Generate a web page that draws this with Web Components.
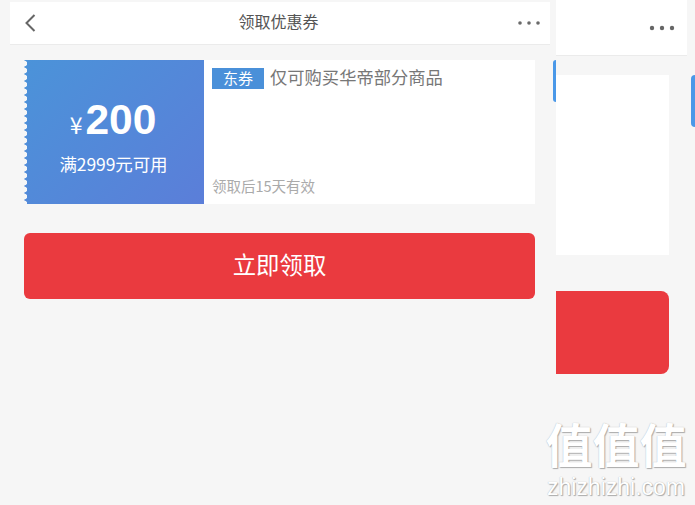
<!DOCTYPE html>
<html lang="zh">
<head>
<meta charset="utf-8">
<title>领取优惠券</title>
<style>
  html, body { margin: 0; height: 100%; }
  body {
    width: 695px;
    height: 505px;
    overflow: hidden;
    background: #f6f6f6;
    font-family: "Noto Sans CJK SC", "Liberation Sans", sans-serif;
    position: relative;
  }
  #stage { display: flex; height: 100%; }
</style>
</head>
<body>
<div id="stage">
  <coupon-page>
    <nav-bar title="领取优惠券"></nav-bar>
    <coupon-ticket amount="200" rule="满2999元可用" tag="东券" desc="仅可购买华帝部分商品" expire="领取后15天有效"></coupon-ticket>
    <claim-button>立即领取</claim-button>
  </coupon-page>
  <next-page></next-page>
</div>
<side-tab style="left:553px;top:60px;width:3px;height:42px"></side-tab>
<side-tab style="left:691px;top:75px;width:4px;height:52px"></side-tab>
<site-mark></site-mark>

<script>
const DOTS = `<svg width="22" height="4" viewBox="0 0 22 4" fill="#6a6a6a"><circle cx="2" cy="2" r="1.8"/><circle cx="11" cy="2" r="1.8"/><circle cx="20" cy="2" r="1.8"/></svg>`;

class CouponPage extends HTMLElement {
  constructor() {
    super();
    this.attachShadow({ mode: "open" }).innerHTML = `
      <style>
        :host { display: flex; flex-direction: column; width: 540px; margin-left: 10px; padding-top: 2px; box-sizing: border-box; }
      </style>
      <slot></slot>`;
  }
}

class NavBar extends HTMLElement {
  constructor() {
    super();
    this.attachShadow({ mode: "open" }).innerHTML = `
      <style>
        :host { display: flex; align-items: center; justify-content: space-between; height: 42px; padding: 0 10px 0 14px; background: #fff; border-bottom: 1px solid #ebebeb; color: #555; }
        svg { display: block; }
        .title { font-size: 16px; line-height: 38px; padding-bottom: 4px; margin-left: 3px; }
      </style>
      <svg width="12" height="18" viewBox="0 0 12 18" fill="none" stroke="#666" stroke-width="2"><path d="M10.5 1 L2.5 9 L10.5 17"/></svg>
      <span class="title">${this.getAttribute("title")}</span>
      <span>${DOTS}</span>`;
  }
}

class CouponTicket extends HTMLElement {
  constructor() {
    super();
    this.attachShadow({ mode: "open" }).innerHTML = `
      <style>
        :host { display: flex; height: 144px; margin: 15px 15px 0 14px; background: #fff; }
        .left {
          position: relative;
          width: 180px;
          display: flex; flex-direction: column; align-items: center;
          color: #fff;
          background: linear-gradient(135deg, #4b93d9, #5b7ed9);
        }
        .left::before {
          content: ""; position: absolute; left: 0; top: 0; bottom: 0; width: 4px;
          background: radial-gradient(circle at 0 50%, #f6f6f6 2.8px, transparent 3.4px) 0 0 / 4px 7px repeat-y;
        }
        .price { display: flex; align-items: baseline; margin-top: 35px; height: 50px; line-height: 50px; padding-right: 2px; font-family: "Liberation Sans", sans-serif; }
        .yen { font-size: 23px; margin-right: 3px; font-family: "Noto Sans CJK SC", sans-serif; }
        .num { font-size: 42.5px; font-weight: 700; }
        .rule { font-size: 17.5px; line-height: 24px; margin-top: 7px; padding-right: 1px; letter-spacing: -.1px; }
        .right { flex: 1; display: flex; flex-direction: column; justify-content: space-between; padding: 8px 8px 8px; }
        .line { display: flex; align-items: flex-start; }
        .tag { width: 52px; height: 21px; line-height: 19px; text-align: center; font-size: 15px; color: #fff; background: #4a90d9; }
        .desc { font-size: 17.3px; line-height: 21px; margin-left: 6px; margin-top: -2px; color: #777; }
        .expire { font-size: 14.5px; line-height: 20px; color: #aaa; }
      </style>
      <div class="left">
        <div class="price"><span class="yen">¥</span><span class="num">${this.getAttribute("amount")}</span></div>
        <div class="rule">${this.getAttribute("rule")}</div>
      </div>
      <div class="right">
        <div class="line"><span class="tag">${this.getAttribute("tag")}</span><span class="desc">${this.getAttribute("desc")}</span></div>
        <div class="expire">${this.getAttribute("expire")}</div>
      </div>`;
  }
}

class ClaimButton extends HTMLElement {
  constructor() {
    super();
    this.attachShadow({ mode: "open" }).innerHTML = `
      <style>
        :host { display: flex; align-items: center; justify-content: center; height: 62px; padding-bottom: 4px; margin: 29px 15px 0 14px; border-radius: 6px; background: #ea3a3f; color: #fff; font-size: 23.4px; }
      </style>
      <slot></slot>`;
  }
}

class NextPage extends HTMLElement {
  constructor() {
    super();
    this.attachShadow({ mode: "open" }).innerHTML = `
      <style>
        :host { display: flex; flex-direction: column; width: 131px; margin-left: 6px; }
        .bar { display: flex; align-items: center; justify-content: flex-end; height: 56px; padding-right: 12px; background: #fff; border-bottom: 1px solid #ebebeb; box-sizing: border-box; }
        svg { display: block; }
        .card { width: 113px; height: 180px; margin-top: 19px; background: #fff; }
        .btn { width: 113px; height: 83px; margin-top: 36px; background: #ea3a3f; border-radius: 0 8px 8px 0; }
      </style>
      <div class="bar"><svg width="26" height="6" viewBox="0 0 26 6" fill="#666"><circle cx="3" cy="3" r="2.2"/><circle cx="13" cy="3" r="2.2"/><circle cx="23" cy="3" r="2.2"/></svg></div>
      <div class="card"></div>
      <div class="btn"></div>`;
  }
}

class SideTab extends HTMLElement {
  constructor() {
    super();
    this.attachShadow({ mode: "open" }).innerHTML = `
      <style>
        :host { display: block; position: absolute; background: #4a98e8; border-radius: 5px 0 0 5px; }
      </style>`;
  }
}

class SiteMark extends HTMLElement {
  constructor() {
    super();
    this.attachShadow({ mode: "open" }).innerHTML = `
      <style>
        :host { display: flex; flex-direction: column; align-items: center; position: absolute; left: 545px; top: 420px; width: 142px; color: #fff; text-shadow: 1px 1px 1px #aaa, 0 0 1px #aaa; }
        .cn { font-family: "Liberation Sans", "Noto Sans CJK SC", sans-serif; font-size: 47px; line-height: 54px; font-weight: 700; white-space: nowrap; }
        .en { font-family: "Liberation Sans", sans-serif; font-size: 23px; line-height: 26px; white-space: nowrap; }
      </style>
      <div class="cn">值值值</div>
      <div class="en">zhizhizhi.com</div>`;
  }
}

customElements.define("coupon-page", CouponPage);
customElements.define("nav-bar", NavBar);
customElements.define("coupon-ticket", CouponTicket);
customElements.define("claim-button", ClaimButton);
customElements.define("next-page", NextPage);
customElements.define("side-tab", SideTab);
customElements.define("site-mark", SiteMark);
</script>
</body>
</html>
